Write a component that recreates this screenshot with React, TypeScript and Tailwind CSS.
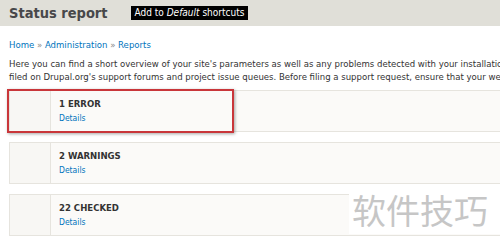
const font = { fontFamily: '"DejaVu Sans Condensed", "DejaVu Sans", sans-serif' };

const cards = [
  { title: "1 ERROR" },
  { title: "2 WARNINGS" },
  { title: "22 CHECKED" },
];

export default function App() {
  return (
    <div
      className="relative h-[244px] w-[500px] overflow-hidden bg-white text-[#333]"
      style={font}
    >
      <header className="flex h-[26px] items-center bg-[#e0dfd8] pl-[9px]">
        <h1 className="text-[14.5px] font-bold leading-none text-[#48484a]">
          Status report
        </h1>
        <span className="ml-[23px] flex h-[14px] items-center bg-black px-[4px] text-[10px] leading-none text-white">
          Add to&nbsp;<em>Default</em>&nbsp;shortcuts
        </span>
      </header>

      <div className="px-[9px]">
        <nav className="mt-[13px] text-[9.5px] leading-[12px] text-[#0074bd]">
          Home <span className="text-[#888]">»</span> Administration{" "}
          <span className="text-[#888]">»</span> Reports
        </nav>

        <p className="mt-[7px] whitespace-nowrap text-[9.5px] leading-[12.5px] text-[#333]">
          Here you can find a short overview of your site's parameters as well as any problems detected with your installation. It may be useful
          <br />
          filed on Drupal.org's support forums and project issue queues. Before filing a support request, ensure that your web server meets
        </p>

        <div className="mt-[7px] flex flex-col gap-[10px]">
          {cards.map((card) => (
            <div
              key={card.title}
              className="flex h-[42px] w-[520px] border border-[#e6e4de] bg-[#fbfaf8]"
            >
              <div className="w-[41px] shrink-0 border-r border-[#e6e4de] bg-[#f8f7f4]" />
              <div className="flex flex-col pl-[8px] pt-[7px]">
                <p className="text-[9.5px] font-bold leading-[12px] text-[#333]">
                  {card.title}
                </p>
                <a className="mt-[1px] block text-[8.5px] leading-[14px] text-[#0074bd]">
                  Details
                </a>
              </div>
            </div>
          ))}
        </div>
      </div>

      <div className="absolute left-[7px] top-[89px] h-[44px] w-[227px] border-2 border-[#c9363a] shadow-[1px_1px_3px_rgba(0,0,0,0.35)]" />

      <div
        className="absolute left-[349px] top-[186px] h-[48px] w-[151px] bg-white pl-[3px] text-[34px] leading-[48px] text-[#c6c6c6]"
        style={{ fontFamily: '"Noto Sans CJK SC", sans-serif' }}
      >
        软件技巧
      </div>
    </div>
  );
}
